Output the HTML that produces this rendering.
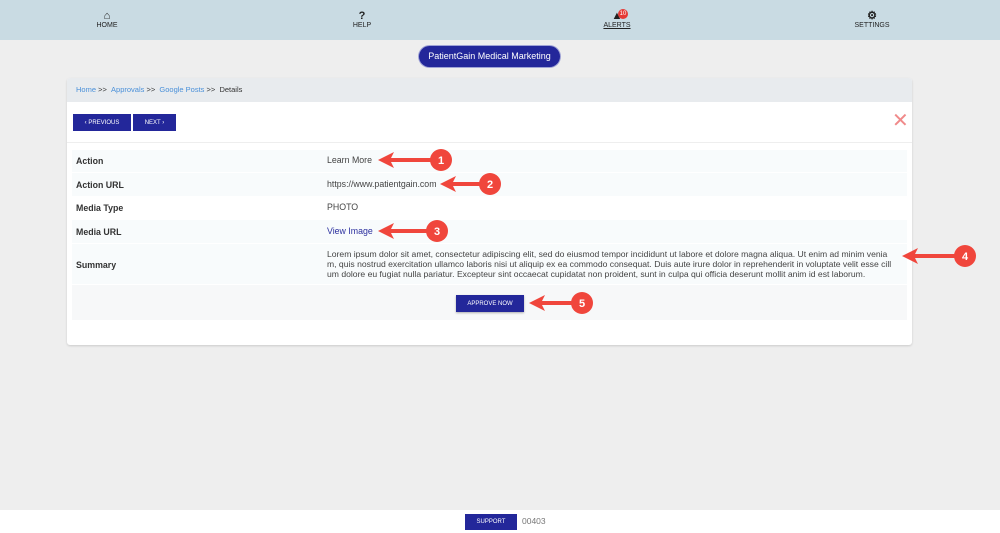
<!DOCTYPE html>
<html><head><meta charset="utf-8"><style>
*{margin:0;padding:0;box-sizing:border-box}
body{width:1000px;height:533px;background:#eeeeee;font-family:"Liberation Sans",Arial,sans-serif;position:relative;overflow:hidden}
.hdr{position:absolute;left:0;top:0;width:1000px;height:40px;background:#c9dbe3}
.nav{position:absolute;top:10px;font-size:7px;color:#222;text-align:center;width:60px;margin-left:-30px}
.nav .ic{font-size:11px;line-height:12px;font-weight:bold}
.pill{position:absolute;left:419px;top:46px;width:141px;height:21px;border-radius:11px;background:#23279a;color:#fff;font-size:9px;text-align:center;line-height:21px;box-shadow:0 0 0 1px #9fa3d6}
.card{position:absolute;left:67px;top:78px;width:845px;height:267px;background:#fff;border-radius:3px;box-shadow:0 1px 2px rgba(0,0,0,.15)}
.bc{height:24px;background:#e8ebee;font-size:7.5px;line-height:24px;padding-left:9px;color:#333;border-radius:3px 3px 0 0}
.bc a{color:#4a90d9}
.btn{position:absolute;background:#23279a;color:#fff;font-size:6px;text-align:center;display:flex;align-items:center;justify-content:center;height:17px}
.row{position:absolute;left:5px;width:835px;background:#f8fbfc;font-size:8.8px;color:#333}
.row .k{position:absolute;left:4px;font-weight:bold;color:#333}
.row .v{position:absolute;left:255px;color:#444}
.line{position:absolute;left:0;top:64px;width:845px;height:1px;background:#eee}
.ft{position:absolute;left:0;top:510px;width:1000px;height:23px;background:#fff}
</style></head><body>
<div class="hdr">
<div class="nav" style="left:107px"><div class="ic">&#8962;</div>HOME</div>
<div class="nav" style="left:362px"><div class="ic">?</div>HELP</div>
<div class="nav" style="left:617px"><div class="ic">&#9650;</div><u>ALERTS</u></div>
<div style="position:absolute;left:618px;top:9px;width:10px;height:10px;border-radius:5px;background:#e53935;color:#fff;font-size:6px;text-align:center;line-height:10px">10</div>
<div class="nav" style="left:872px"><div class="ic">&#9881;</div>SETTINGS</div>
</div>
<div class="pill">PatientGain Medical Marketing</div>
<div class="card">
<div class="bc"><a>Home</a> &gt;&gt; &nbsp;<a>Approvals</a> &gt;&gt; &nbsp;<a>Google Posts</a> &gt;&gt; &nbsp;Details</div>
<div class="btn" style="left:6px;top:36px;width:58px">&#8249; PREVIOUS</div>
<div class="btn" style="left:66px;top:36px;width:43px">NEXT &#8250;</div>
<div style="position:absolute;left:825px;top:33px;color:#f08a8a;font-size:20px;line-height:20px">&#10005;</div>
<div class="line"></div>
<div class="row" style="top:72px;height:22px"><span class="k" style="top:6px">Action</span><span class="v" style="top:5px">Learn More</span></div>
<div class="row" style="top:95px;height:23px"><span class="k" style="top:7px">Action URL</span><span class="v" style="top:6px">https://www.patientgain.com</span></div>
<div class="row" style="top:119px;height:22px;background:#fff"><span class="k" style="top:6px">Media Type</span><span class="v" style="top:5px">PHOTO</span></div>
<div class="row" style="top:142px;height:23px"><span class="k" style="top:7px">Media URL</span><span class="v" style="top:6px;color:#2b2f9e">View Image</span></div>
<div class="row" style="top:166px;height:40px"><span class="k" style="top:16px">Summary</span><span class="v" style="top:5px;font-size:8.6px;line-height:10px;white-space:nowrap">Lorem ipsum dolor sit amet, consectetur adipiscing elit, sed do eiusmod tempor incididunt ut labore et dolore magna aliqua. Ut enim ad minim venia<br>m, quis nostrud exercitation ullamco laboris nisi ut aliquip ex ea commodo consequat. Duis aute irure dolor in reprehenderit in voluptate velit esse cill<br>um dolore eu fugiat nulla pariatur. Excepteur sint occaecat cupidatat non proident, sunt in culpa qui officia deserunt mollit anim id est laborum.</span></div>
<div class="row" style="top:207px;height:35px;background:#f7f8f9"></div>
<div class="btn" style="left:389px;top:217px;width:68px;box-shadow:0 1px 2px rgba(0,0,0,.3)">APPROVE NOW</div>
</div>
<svg style="position:absolute;left:0;top:0" width="1000" height="533">
<g fill="#f0463c">
<polygon points="378,160 394,152 391,158 432,158 432,162 391,162 394,168"/><circle cx="441" cy="160" r="11"/>
<polygon points="440,184 456,176 453,182 482,182 482,186 453,186 456,192"/><circle cx="490" cy="184" r="11"/>
<polygon points="378,231 394,223 391,229 428,229 428,233 391,233 394,239"/><circle cx="437" cy="231" r="11"/>
<polygon points="902,256 918,248 915,254 956,254 956,258 915,258 918,264"/><circle cx="965" cy="256" r="11"/>
<polygon points="529,303 545,295 542,301 574,301 574,305 542,305 545,311"/><circle cx="582" cy="303" r="11"/>
</g>
<g fill="#fff" font-family="Liberation Sans,sans-serif" font-size="11" font-weight="bold" text-anchor="middle">
<text x="441" y="164">1</text><text x="490" y="188">2</text><text x="437" y="235">3</text><text x="965" y="260">4</text><text x="582" y="307">5</text>
</g></svg>
<div class="ft"></div>
<div class="btn" style="left:465px;top:514px;width:52px;height:16px">SUPPORT</div>
<div style="position:absolute;left:522px;top:516px;font-size:8.5px;color:#777">00403</div>
</body></html>
